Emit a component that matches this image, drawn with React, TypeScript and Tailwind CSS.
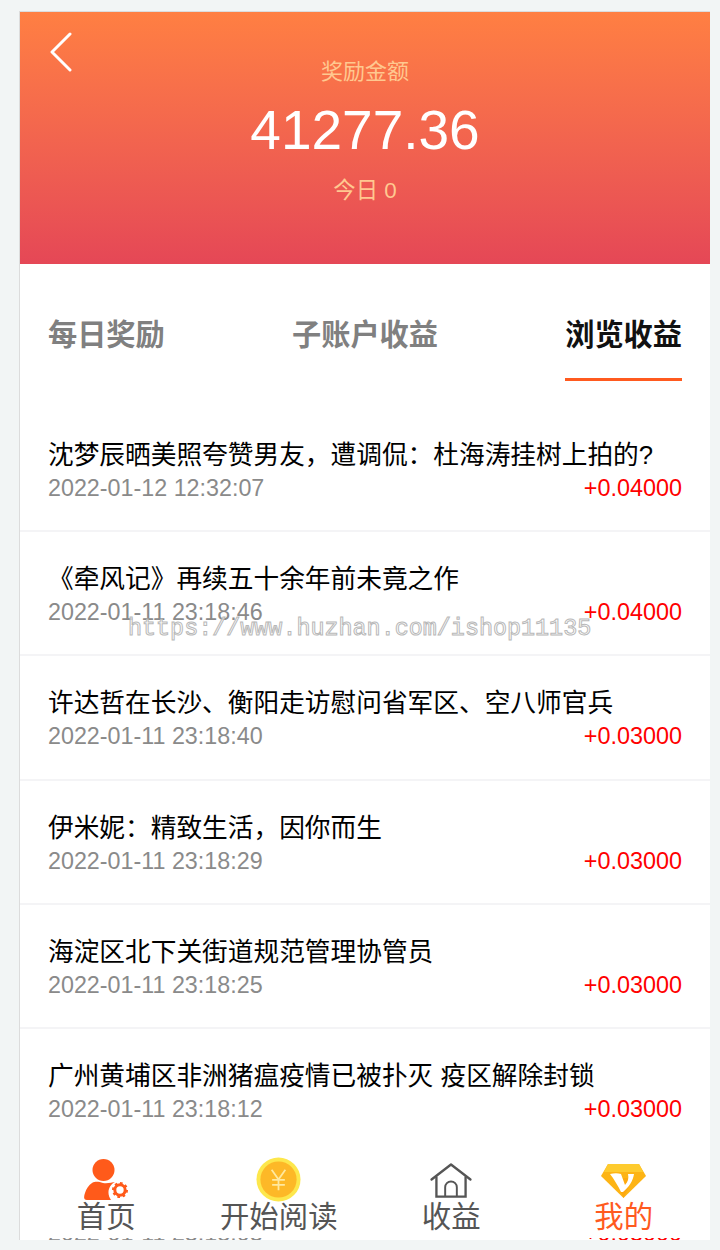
const rows = [
  { title: '沈梦辰晒美照夸赞男友，遭调侃：杜海涛挂树上拍的?', time: '2022-01-12 12:32:07', amount: '+0.04000' },
  { title: '《牵风记》再续五十余年前未竟之作', time: '2022-01-11 23:18:46', amount: '+0.04000' },
  { title: '许达哲在长沙、衡阳走访慰问省军区、空八师官兵', time: '2022-01-11 23:18:40', amount: '+0.03000' },
  { title: '伊米妮：精致生活，因你而生', time: '2022-01-11 23:18:29', amount: '+0.03000' },
  { title: '海淀区北下关街道规范管理协管员', time: '2022-01-11 23:18:25', amount: '+0.03000' },
  { title: '广州黄埔区非洲猪瘟疫情已被扑灭 疫区解除封锁', time: '2022-01-11 23:18:12', amount: '+0.03000' },
  // only the bottom edge of this row's date shows under the nav bar
  { title: '\u00a0', time: '2022-01-11 23:18:03', amount: '+0.03000' },
];

const tabs = ['每日奖励', '子账户收益', '浏览收益'];

function PersonIcon() {
  return (
    <svg className="-mb-[3px]" width="44" height="42" viewBox="0 0 44 42">
      <circle cx="19.5" cy="11" r="11" fill="#ff5a1a" />
      <path d="M8 24 C12 22 15 23 19 24 C24 25 28 23 31 23 C25 26 22 34 27 41 L3 41 C-1 41 0 37 1 34 C2 30 5 26 8 24 Z" fill="#ff5a1a" />
      <circle cx="36" cy="31" r="5.2" fill="none" stroke="#ff5a1a" strokeWidth="3" />
      <circle cx="36" cy="31" r="6.8" fill="none" stroke="#ff5a1a" strokeWidth="2.4" strokeDasharray="2.6 2.7" />
    </svg>
  );
}

function CoinIcon() {
  return (
    <svg className="-mb-[4px]" width="45" height="45" viewBox="0 0 46 46">
      <circle cx="23" cy="23" r="22.5" fill="#fde74c" />
      <circle cx="23" cy="23" r="18.5" fill="#fdb827" />
      <path d="M16 13 L23 23 L30 13 M23 23 V34 M16.5 23.5 H29.5 M16.5 28.5 H29.5" fill="none" stroke="#ffe9a0" strokeWidth="1.8" />
    </svg>
  );
}

function HouseIcon() {
  return (
    <svg width="42" height="35" viewBox="0 0 42 36" fill="none" stroke="#555555" strokeWidth="2.4">
      <path d="M1 17 L21 1.5 L41 17" strokeLinejoin="round" strokeLinecap="round" />
      <path d="M6 14 V34.5 H36 V14" />
      <path d="M15 34 V25 A6 6 0 0 1 27 25 V34" strokeWidth="2" />
    </svg>
  );
}

function DiamondIcon() {
  return (
    <svg width="46" height="34" viewBox="0 0 46 34">
      <path d="M7 0 H38 L45 12 L22.5 34 L0 12 Z" fill="#fdb415" />
      <path d="M7 0 H38 L42 8 H3 Z" fill="#fecb2e" />
      <path d="M22.5 34 L13 14 H32 Z" fill="#fda90f" />
      <path d="M9 10 C13 9 17 9 20 10 L24 21 C27 18 28 14 27 10 L33 10 C32 17 28 23 22 28 L20 28 C17 22 13 15 9 10 Z" fill="#ffffff" />
    </svg>
  );
}

const navItems = [
  { label: '首页', icon: <PersonIcon />, active: false },
  { label: '开始阅读', icon: <CoinIcon />, active: false },
  { label: '收益', icon: <HouseIcon />, active: false },
  { label: '我的', icon: <DiamondIcon />, active: true },
];

export default function App() {
  return (
    <div className="h-[1250px] overflow-hidden bg-[#f2f5f5] pt-[11px] font-['Liberation_Sans','Noto_Sans_CJK_SC',sans-serif]">
      <div className="relative ml-[19px] h-[1229px] w-[691px] overflow-hidden border-t border-l border-[#dcdcdc] bg-white">
        {/* Header */}
        <div className="relative flex h-[252px] flex-col items-center bg-gradient-to-b from-[#ff7f42] to-[#e54756]">
          <svg className="absolute top-[20px] left-[29px]" width="24" height="40" viewBox="0 0 24 40" fill="none" stroke="#ffffff" strokeWidth="3" strokeLinecap="round" strokeLinejoin="round">
            <path d="M21 2 L3 20 L21 38" />
          </svg>
          <div className="mt-[45px] text-[22px] leading-[30px] text-[#ffc890]">奖励金额</div>
          <div className="mt-[11px] text-[55px] leading-[64px] text-white">41277.36</div>
          <div className="mt-[14px] text-[22.4px] leading-[30px] text-[#ffc890]">今日 0</div>
        </div>

        {/* Tabs */}
        <div className="flex h-[117px] justify-between px-[28px]">
          {tabs.map((tab, i) => (
            <div key={tab} className={'flex h-full flex-col justify-between pt-[52px] ' + (i === 2 ? 'border-b-[3px] border-[#ff5a1f]' : '')}>
              <span className={'text-[29.2px] leading-[38px] font-bold ' + (i === 2 ? 'text-[#111111]' : 'text-[#808080]')}>{tab}</span>
            </div>
          ))}
        </div>

        {/* List */}
        <div className="mt-[27px]">
          {rows.map((row) => (
            <div key={row.time} className="h-[124.2px] border-b-2 border-[#f4f4f6] px-[28px] pt-[29px]">
              <div className="text-[25.7px] leading-[36px] whitespace-nowrap text-black">{row.title}</div>
              <div className="flex justify-between leading-[30px]">
                <span className="text-[23.3px] text-[#8a8a8a]">{row.time}</span>
                <span className="text-[23.4px] text-[#ff0000]">{row.amount}</span>
              </div>
            </div>
          ))}
        </div>

        {/* Watermark */}
        <div className="absolute top-[601px] left-[108px] font-['Liberation_Mono',monospace] text-[23.4px] leading-[32px] whitespace-nowrap text-white/70 opacity-[0.99] [-webkit-text-stroke:1px_#b8b8b8]">
          https://www.huzhan.com/ishop11135
        </div>

        {/* Bottom nav */}
        <div className="absolute right-0 bottom-[2px] left-0 grid h-[90px] grid-cols-4 bg-white">
          {navItems.map((item) => (
            <div key={item.label} className="flex flex-col items-center">
              <div className="flex h-[51px] items-end justify-center pb-[1px]">{item.icon}</div>
              <div className={'text-[29.4px] leading-[36px] whitespace-nowrap ' + (item.active ? 'text-[#ff5a1f]' : 'text-[#555555]')}>{item.label}</div>
            </div>
          ))}
        </div>
      </div>
    </div>
  );
}
